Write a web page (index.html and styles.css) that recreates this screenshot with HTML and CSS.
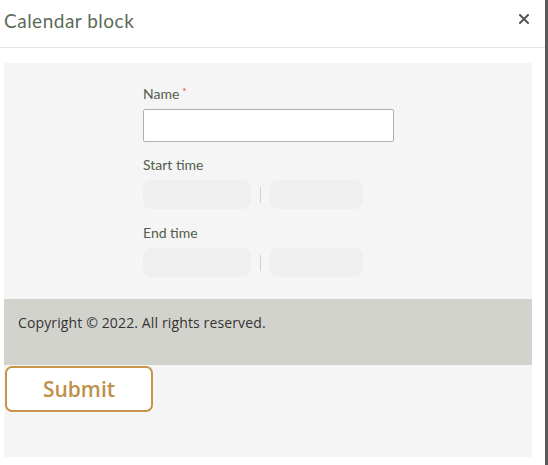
FILE: index.html
```html
<!DOCTYPE html>
<html>
<head>
<meta charset="utf-8">
<link rel="stylesheet" href="styles.css">
</head>
<body>
<div class="modal">
  <div class="header">
    <h1 class="title">Calendar block</h1>
    <svg class="close" width="10" height="10" viewBox="0 0 10 10" aria-label="close"><path d="M1 1L9 9M9 1L1 9" stroke="#555" stroke-width="2" stroke-linecap="square"/></svg>
  </div>
  <div class="content">
    <div class="panel">
      <div class="form">
        <label class="label">Name<span class="req">*</span></label>
        <input class="text-input" type="text">
        <label class="label gap">Start time</label>
        <div class="time-row">
          <div class="time-box wide"></div>
          <span class="sep"></span>
          <div class="time-box narrow"></div>
        </div>
        <label class="label gap gap2">End time</label>
        <div class="time-row">
          <div class="time-box wide"></div>
          <span class="sep"></span>
          <div class="time-box narrow"></div>
        </div>
      </div>
      <div class="footer">Copyright © 2022. All rights reserved.</div>
      <button class="submit">Submit</button>
    </div>
  </div>
</div>
</body>
</html>
```
FILE: styles.css
```css
html, body {
  margin: 0;
  padding: 0;
  background: #ffffff;
}
body {
  font-family: "Lato", "Open Sans", sans-serif;
}
.modal {
  width: 545px;
  height: 465px;
  border-right: 3px solid #5a5a5a;
  background: #fff;
  box-sizing: content-box;
}
.header {
  height: 48px;
  border-bottom: 1px solid #e4e4e4;
  display: flex;
  align-items: center;
  justify-content: space-between;
  padding: 0 16px 6px 4px;
  box-sizing: border-box;
}
.title {
  margin: 0;
  font-family: "Lato", sans-serif;
  font-weight: 400;
  font-size: 19px;
  color: #5b6b57;
  letter-spacing: 0.5px;
}
.close {
  display: block;
  margin-top: -4px;
}
.content {
  padding: 15px 13px 0 4px;
}
.panel {
  background: #f5f5f5;
  height: 394px;
}
.form {
  padding: 23px 0 0 139px;
  display: flex;
  flex-direction: column;
  align-items: flex-start;
}
.label {
  font-family: "Lato", sans-serif;
  font-size: 14px;
  line-height: 16px;
  color: #4f5e4b;
}
.label.gap {
  margin-top: 15px;
}
.label.gap2 {
  margin-top: 16px;
}
.req {
  color: #e0463c;
  font-size: 10px;
  vertical-align: top;
  margin-left: 3px;
  line-height: 10px;
}
.text-input {
  margin-top: 7px;
  width: 251px;
  height: 33px;
  box-sizing: border-box;
  border: 1px solid #b0b0b0;
  border-radius: 2px;
  background: #fff;
  padding: 0;
}
.time-row {
  margin-top: 7px;
  display: flex;
  align-items: center;
}
.time-box {
  height: 29px;
  background: #efefef;
  border-radius: 8px;
}
.time-box.wide { width: 108px; }
.time-box.narrow { width: 93px; }
.sep {
  width: 1px;
  height: 16px;
  background: #c9d1e6;
  margin: 0 9px 0 9px;
}
.footer {
  margin-top: 22px;
  height: 66px;
  background: #d3d3ce;
  box-sizing: border-box;
  padding: 14px 14px;
  font-family: "Open Sans", sans-serif;
  font-size: 14px;
  letter-spacing: 0.13px;
  color: #333;
}
.submit {
  display: block;
  margin: 1px 0 0 1px;
  width: 148px;
  height: 46px;
  border: 2px solid #c8944a;
  border-radius: 7px;
  background: #fff;
  color: #c0904c;
  font-family: "Open Sans", sans-serif;
  font-size: 21px;
  font-weight: 600;
  padding: 0;
}
```
